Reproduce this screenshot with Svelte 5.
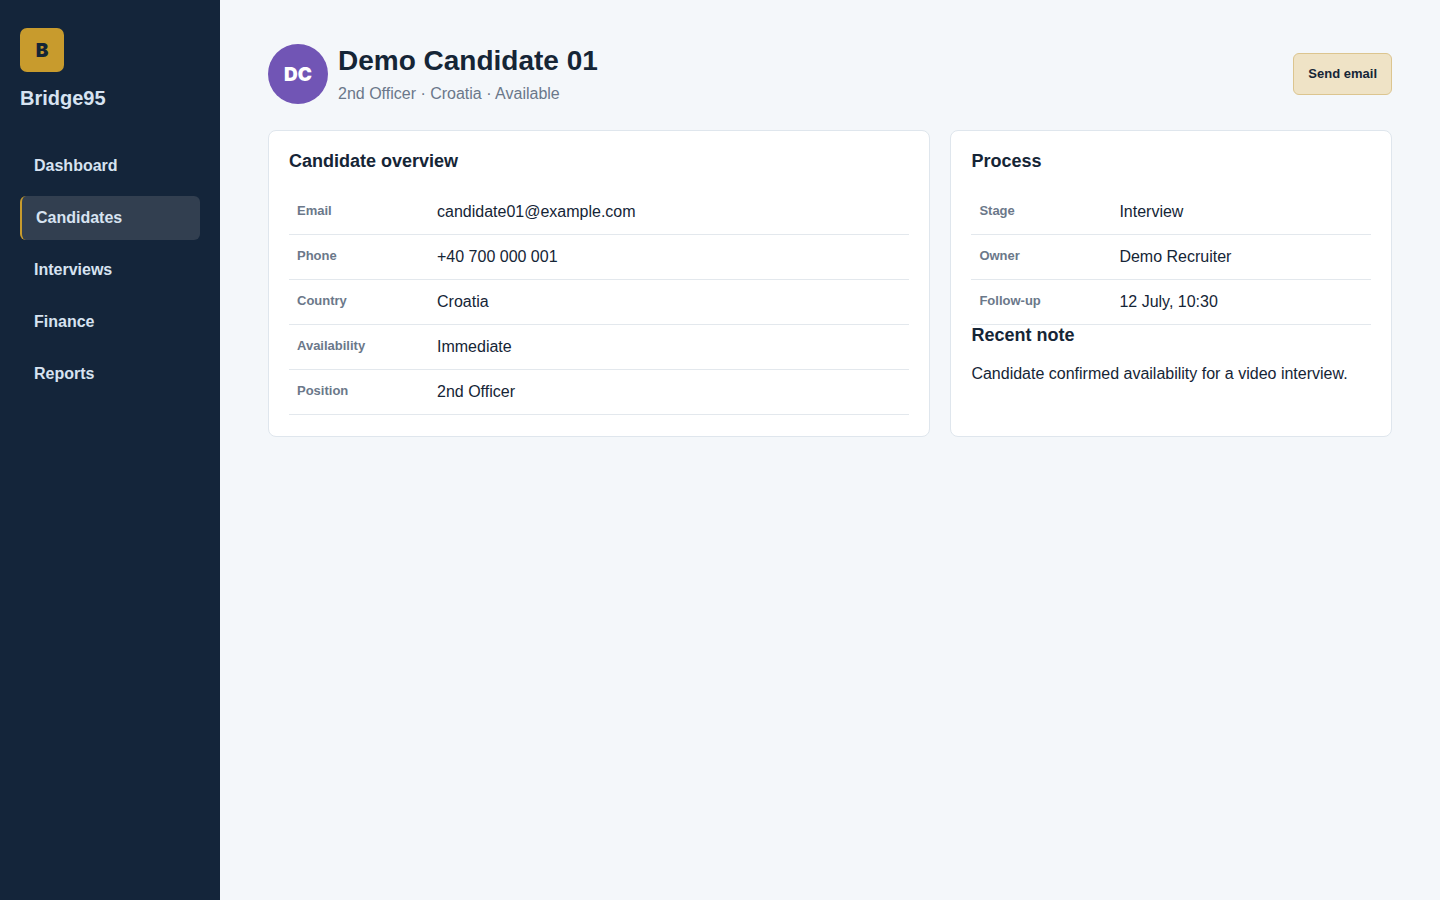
<script>
  let active = $state('Candidates');

  const links = ['Dashboard', 'Candidates', 'Interviews', 'Finance', 'Reports'];

  const overview = [
    ['Email', 'candidate01@example.com'],
    ['Phone', '+40 700 000 001'],
    ['Country', 'Croatia'],
    ['Availability', 'Immediate'],
    ['Position', '2nd Officer']
  ];

  const process = [
    ['Stage', 'Interview'],
    ['Owner', 'Demo Recruiter'],
    ['Follow-up', '12 July, 10:30']
  ];
</script>

{#snippet details(rows)}
  <table>
    <tbody>
      {#each rows as [label, value]}
        <tr>
          <th scope="row">{label}</th>
          <td>{value}</td>
        </tr>
      {/each}
    </tbody>
  </table>
{/snippet}

<div class="app">
  <aside>
    <div class="logo">B</div>
    <div class="brand">Bridge95</div>
    <nav>
      {#each links as link}
        <a
          href="#{link.toLowerCase()}"
          class:active={active === link}
          aria-current={active === link ? 'page' : undefined}
          onclick={() => (active = link)}
        >{link}</a>
      {/each}
    </nav>
  </aside>

  <main>
    <header>
      <div class="avatar">DC</div>
      <div class="who">
        <h1>Demo Candidate 01</h1>
        <p>2nd Officer · Croatia · Available</p>
      </div>
      <button type="button">Send email</button>
    </header>

    <div class="cards">
      <section>
        <h2>Candidate overview</h2>
        {@render details(overview)}
      </section>
      <section>
        <h2>Process</h2>
        {@render details(process)}
        <h2>Recent note</h2>
        <p>Candidate confirmed availability for a video interview.</p>
      </section>
    </div>
  </main>
</div>

<style>
  :global(body) {
    margin: 0;
    background: #f4f7fa;
  }

  .app {
    display: grid;
    grid-template-columns: 220px 1fr;
    min-height: 100vh;
    font-family: "Liberation Sans", Arial, sans-serif;
    font-size: 16px;
    color: #152536;
  }

  aside {
    background: #14253a;
    color: #d7e3f1;
    padding: 28px 20px;
  }

  .logo,
  .avatar {
    display: grid;
    place-items: center;
    box-sizing: border-box;
    padding-top: 2px;
    font-family: Inter, "Arial Black", sans-serif;
    font-size: 19px;
    font-weight: 900;
    line-height: 24px;
  }

  .logo {
    width: 44px;
    height: 44px;
    border-radius: 7px;
    background: #c89b2d;
    color: #152536;
  }

  .brand {
    margin-top: 14px;
    font-size: 20px;
    line-height: 24px;
    font-weight: 700;
  }

  nav {
    display: grid;
    gap: 8px;
    margin-top: 34px;
  }

  nav a {
    padding: 10px 14px;
    border-radius: 6px;
    color: inherit;
    font-weight: 700;
    line-height: 24px;
    text-decoration: none;
  }

  nav a.active {
    background: #323f50;
    border-left: 2px solid #c89b2d;
  }

  main {
    padding: 44px 48px;
  }

  header {
    display: flex;
    align-items: center;
    gap: 10px;
    margin-bottom: 26px;
  }

  .avatar {
    width: 60px;
    height: 60px;
    border-radius: 50%;
    background: #7155b5;
    color: #fff;
  }

  .who {
    flex: 1;
  }

  h1 {
    margin: 0;
    font-size: 28px;
    line-height: 34px;
  }

  .who p {
    margin: 6px 0 0;
    color: #6b788a;
    line-height: 20px;
  }

  button {
    padding: 12px 14px;
    border: 1px solid #dcc58f;
    border-radius: 6px;
    background: #efe3c6;
    color: #152536;
    font-family: inherit;
    font-size: 13px;
    font-weight: 700;
    line-height: 16px;
    cursor: pointer;
  }

  .cards {
    display: grid;
    grid-template-columns: 3fr 2fr;
    gap: 20px;
  }

  section {
    padding: 20px 20px 21px;
    border: 1px solid #dfe6ed;
    border-radius: 8px;
    background: #fff;
  }

  h2 {
    margin: 0 0 18px;
    font-size: 18px;
    line-height: 21px;
  }

  section p {
    margin: 0;
    line-height: 20px;
  }

  table {
    width: 100%;
    border-collapse: separate;
    border-spacing: 0;
  }

  th,
  td {
    padding: 10px 8px;
    border-bottom: 1px solid #e3e8ed;
    text-align: left;
    vertical-align: top;
    line-height: 24px;
  }

  th {
    width: 124px;
    color: #6b788a;
    font-size: 13px;
    line-height: 21px;
  }
</style>
